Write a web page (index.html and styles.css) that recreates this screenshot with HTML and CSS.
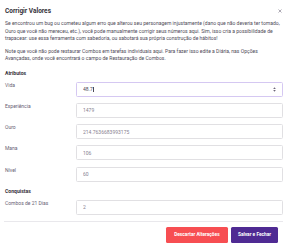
FILE: index.html
```html
<!DOCTYPE html>
<html lang="pt-BR">
<head>
    <meta charset="UTF-8">
    <meta name="viewport" content="width=device-width, initial-scale=1.0">
    <title>Corrigir Valores</title>
    <link rel="stylesheet" href="styles.css">
</head>
<body>
    <div class="modal">
        <div class="modal-header">
            <h1 class="title">Corrigir Valores</h1>
            <button class="close" aria-label="Fechar">
                <svg width="4" height="4" viewBox="0 0 4 4"><path d="M0.5 0.5L3.5 3.5M3.5 0.5L0.5 3.5" stroke="#8b8595" stroke-width="0.7"/></svg>
            </button>
        </div>
        <div class="modal-body">
            <p>Se encontrou um bug ou cometeu algum erro que alterou seu personagem injustamente (dano que não deveria ter tomado, Ouro que você não mereceu, etc.), você pode manualmente corrigir seus números aqui. Sim, isso cria a possibilidade de trapacear: use essa ferramenta com sabedoria, ou sabotará sua própria construção de hábitos!</p>
            <p>Note que você não pode restaurar Combos em tarefas individuais aqui. Para fazer isso edite a Diária, nas Opções Avançadas, onde você encontrará o campo de Restauração de Combos.</p>

            <!-- Atributos -->
            <h3>Atributos</h3>
            <div class="row">
                <label for="hp">Vida</label>
                <div class="field">
                    <input type="text" id="hp" class="focused" value="48.7">
                    <span class="caret"></span>
                    <span class="spinner">
                        <svg width="3" height="5" viewBox="0 0 3 5"><path d="M1.5 0.3L2.8 2H0.2Z M1.5 4.7L2.8 3H0.2Z" fill="#6b6577"/></svg>
                    </span>
                </div>
            </div>
            <div class="row">
                <label for="exp">Experiência</label>
                <div class="field"><input type="text" id="exp" value="1479"></div>
            </div>
            <div class="row">
                <label for="gold">Ouro</label>
                <div class="field"><input type="text" id="gold" value="214.7636683993175"></div>
            </div>
            <div class="row">
                <label for="mp">Mana</label>
                <div class="field"><input type="text" id="mp" value="106"></div>
            </div>
            <div class="row">
                <label for="lvl">Nível</label>
                <div class="field"><input type="text" id="lvl" value="60"></div>
            </div>

            <!-- Conquistas -->
            <h3>Conquistas</h3>
            <div class="row">
                <label for="streak">Combos de 21 Dias</label>
                <div class="field"><input type="text" id="streak" value="2"></div>
            </div>
        </div>
        <div class="modal-footer">
            <button class="btn btn-danger">Descartar Alterações</button>
            <button class="btn btn-primary">Salvar e Fechar</button>
        </div>
    </div>
</body>
</html>
```

FILE: styles.css
```css
html, body {
    margin: 0;
    padding: 0;
    background-color: #fff;
}
body {
    font-family: Roboto, "Noto Sans", sans-serif;
    color: #4e4a57;
}
.modal {
    width: 288px;
    height: 245px;
    box-sizing: border-box;
}
.modal-header {
    display: flex;
    align-items: center;
    justify-content: space-between;
    padding: 7px 5px 0 5px;
}
.title {
    margin: 0;
    font-size: 6.5px;
    line-height: 8px;
    font-weight: 700;
    color: #34313a;
}
.close {
    display: flex;
    padding: 0;
    margin: 0 1px 0 0;
    border: none;
    background: none;
}
.modal-body {
    padding: 5.4px 5px 0 5px;
}
p {
    margin: 0 0 6.1px 0;
    font-size: 5.05px;
    line-height: 7.2px;
}
h3 {
    margin: 7.3px 0 4.9px 0;
    font-size: 5.1px;
    line-height: 7px;
    font-weight: 700;
    color: #34313a;
}
.row {
    display: flex;
    margin-bottom: 6.25px;
}
.row:last-child {
    margin-bottom: 0;
}
.row + h3 {
    margin-top: 0;
}
label {
    width: 71px;
    flex-shrink: 0;
    font-size: 5px;
    line-height: 6.6px;
    color: #686274;
}
.field {
    position: relative;
    flex: 1;
}
input {
    display: block;
    width: 100%;
    height: 15px;
    box-sizing: border-box;
    margin: 0;
    padding: 0 6px;
    border: 1px solid #e1e0e3;
    border-radius: 1.5px;
    font-family: Roboto, "Noto Sans", sans-serif;
    font-size: 5px;
    color: #878190;
    background: #fff;
    outline: none;
}
input.focused {
    border-color: #d5c8f2;
    color: #4e4a57;
}
.caret {
    position: absolute;
    left: 17.2px;
    top: 5px;
    width: 0.5px;
    height: 5px;
    background-color: #4e4a57;
}
.spinner {
    position: absolute;
    right: 7px;
    top: 5px;
    display: flex;
}
.modal-footer {
    display: flex;
    justify-content: flex-end;
    gap: 3px;
    margin: 6px 5px 0 4px;
    padding: 5.4px 4.7px 0 0;
    border-top: 0.6px solid #e9e8ec;
}
.btn {
    height: 15.3px;
    padding: 0 4px;
    border: none;
    border-radius: 1.5px;
    font-family: Roboto, "Noto Sans", sans-serif;
    font-size: 4.8px;
    font-weight: 700;
    color: white;
    cursor: pointer;
}
.btn-danger {
    width: 61.7px;
    background-color: #f74e52;
}
.btn-primary {
    width: 47.6px;
    background-color: #4f2a93;
}
```
